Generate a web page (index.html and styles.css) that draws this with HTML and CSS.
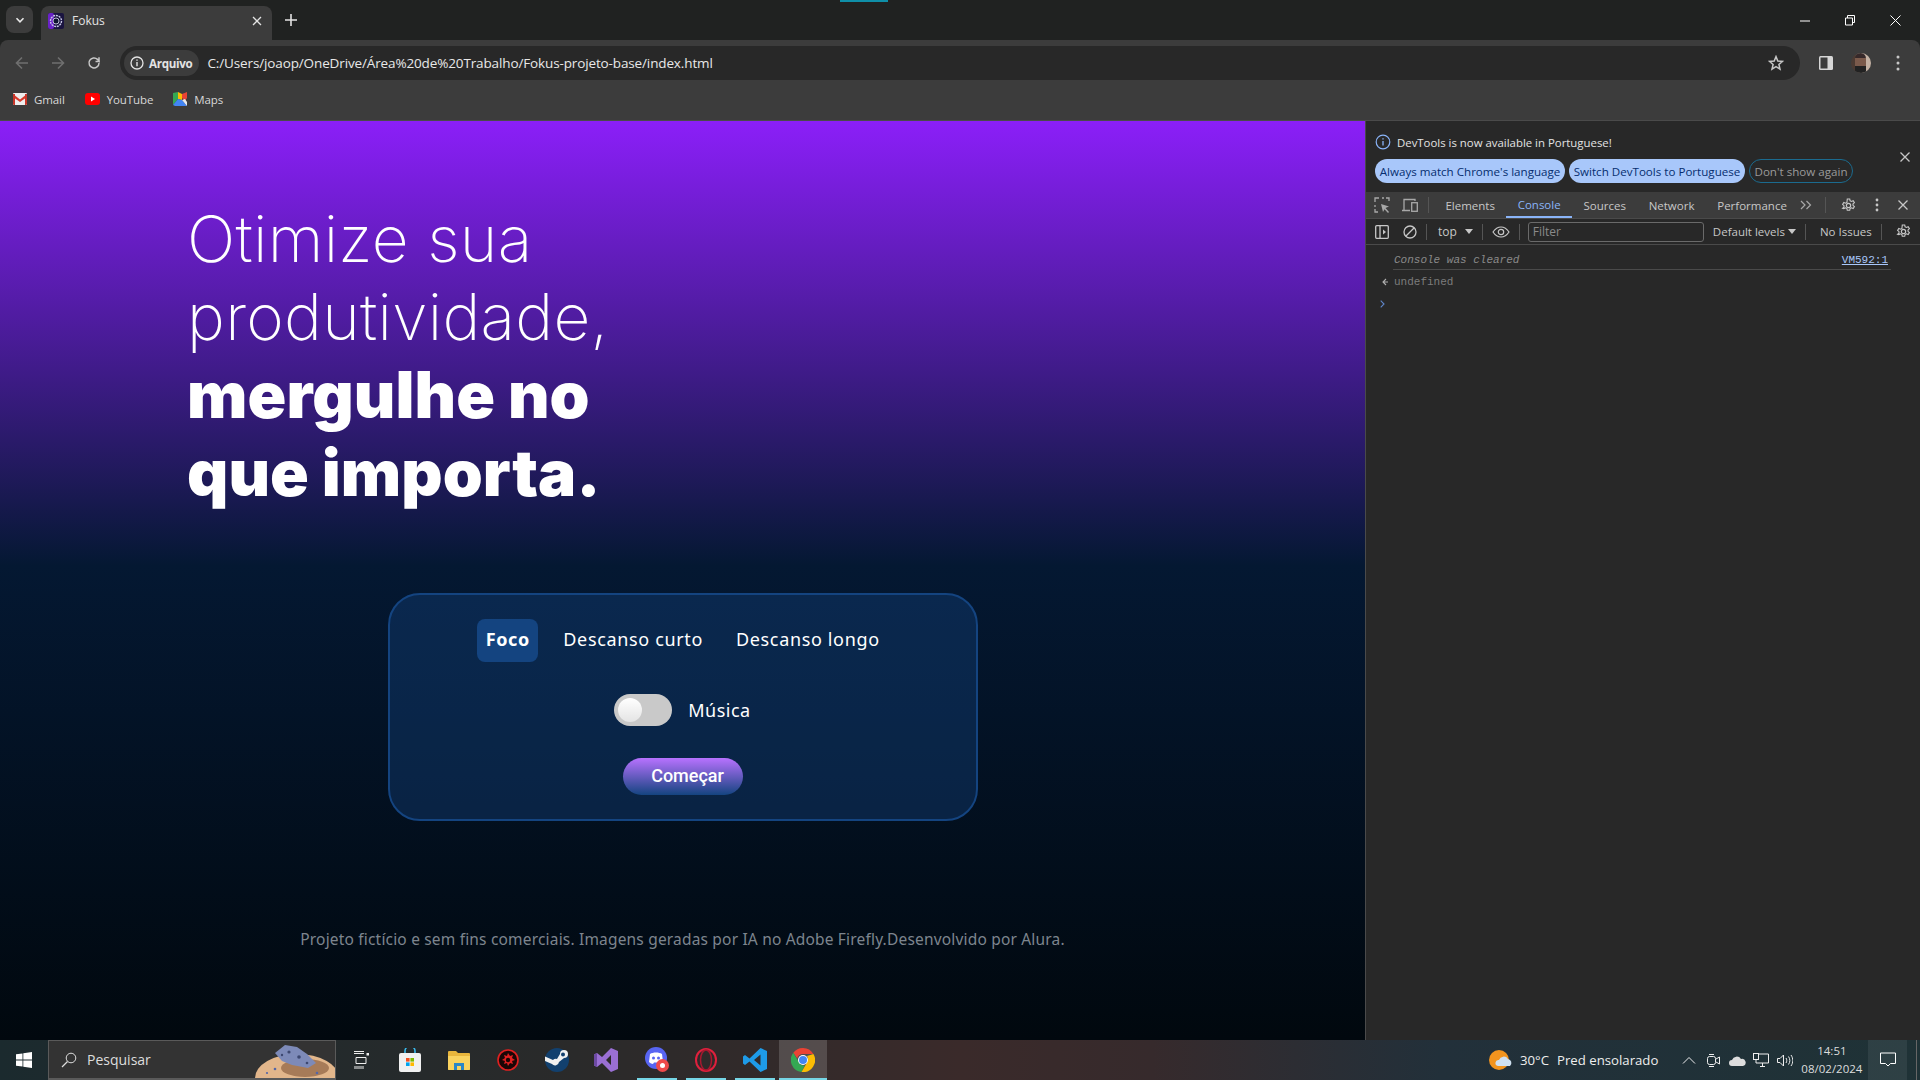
FILE: index.html
```html
<!DOCTYPE html>
<html lang="pt-BR">
<head>
<meta charset="utf-8">
<title>Fokus</title>
<link rel="stylesheet" href="styles.css">
</head>
<body>
<div class="window">
  <div class="top-strip"></div>
  <header class="tabstrip">
    <div class="tab-search"><svg width="10" height="10" viewBox="0 0 10 10"><path d="M1.5 3.2 5 6.8l3.5-3.6" fill="none" stroke="#e8e8e8" stroke-width="1.6"/></svg></div>
    <div class="tab">
      <svg class="favicon" width="16" height="16" viewBox="0 0 16 16"><rect width="16" height="16" rx="2" fill="#1a1440"/><rect width="6" height="16" rx="2" fill="#6a22c8"/><circle cx="8" cy="8" r="5.5" fill="none" stroke="#c9c9e8" stroke-width="1.4" stroke-dasharray="2 .8"/><circle cx="8" cy="8" r="3" fill="#0d1330" stroke="#e6e6f5" stroke-width=".8"/></svg>
      <span class="tab-title">Fokus</span>
      <svg width="10" height="10" viewBox="0 0 10 10"><path d="M1 1l8 8M9 1 1 9" stroke="#e3e3e3" stroke-width="1.3"/></svg>
    </div>
    <svg class="new-tab" width="12" height="12" viewBox="0 0 12 12"><path d="M6 0v12M0 6h12" stroke="#e3e3e3" stroke-width="1.6"/></svg>
    <div class="win-controls">
      <svg width="10" height="10" viewBox="0 0 10 10"><path d="M0 5h10" stroke="#fff"/></svg>
      <svg width="10" height="11" viewBox="0 0 10 11"><path d="M.5 3h7v7h-7zM2.5 3V.5h7v7H7.5" fill="none" stroke="#fff"/></svg>
      <svg width="11" height="11" viewBox="0 0 11 11"><path d="M.5.5l10 10M10.500.5l-10 10" stroke="#fff"/></svg>
    </div>
  </header>
  <div class="toolbar">
    <div class="nav-row">
      <svg class="nav-icon" width="14" height="14" viewBox="0 0 14 14"><path d="M13 7H2M7 1.500 1.500 7 7 12.500" fill="none" stroke="#6f6f6f" stroke-width="1.600"/></svg>
      <svg class="nav-icon" width="14" height="14" viewBox="0 0 14 14"><path d="M1 7h11M7 1.500 12.500 7 7 12.500" fill="none" stroke="#6f6f6f" stroke-width="1.600"/></svg>
      <svg class="nav-icon" width="14" height="14" viewBox="0 0 14 14"><path d="M12 7a5 5 0 1 1-1.500-3.600L12 5V1.200" fill="none" stroke="#c7c7c7" stroke-width="1.500"/><path d="M12.500 5.500H8.500" stroke="#c7c7c7" stroke-width="1.500"/></svg>
      <div class="omnibox">
        <div class="chip">
          <svg width="14" height="14" viewBox="0 0 14 14"><circle cx="7" cy="7" r="6" fill="none" stroke="#e3e3e3" stroke-width="1.300"/><path d="M7 6v4.200M7 3.600v1.200" stroke="#e3e3e3" stroke-width="1.400"/></svg>
          <span>Arquivo</span>
        </div>
        <span class="url">C:/Users/joaop/OneDrive/Área%20de%20Trabalho/Fokus-projeto-base/index.html</span>
        <svg class="star" width="16" height="16" viewBox="0 0 16 16"><path d="M8 1.600 9.800 6l4.700.4-3.600 3.100 1.100 4.600L8 11.700l-4 2.400 1.100-4.600L1.500 6.400 6.200 6z" fill="none" stroke="#c7c7c7" stroke-width="1.500"/></svg>
      </div>
      <svg class="panel-icon" width="14" height="14" viewBox="0 0 14 14"><rect width="14" height="14" rx="1.500" fill="#d6d6d6"/><rect x="1.500" y="1.500" width="7" height="11" fill="#3c3c3c"/></svg>
      <div class="avatar"><div class="avatar-face"></div></div>
      <svg class="menu-icon" width="4" height="16" viewBox="0 0 4 16"><circle cx="2" cy="2" r="1.500" fill="#c7c7c7"/><circle cx="2" cy="8" r="1.500" fill="#c7c7c7"/><circle cx="2" cy="14" r="1.500" fill="#c7c7c7"/></svg>
    </div>
    <div class="bookmarks">
      <div class="bookmark">
        <svg width="14" height="12" viewBox="0 0 14 12"><rect width="14" height="12" rx="1" fill="#eee"/><path d="M0 1l7 5.500L14 1v3L7 9 0 4z" fill="#d8392b"/><path d="M0 1h2v11H1a1 1 0 0 1-1-1zM14 1h-2v11h1a1 1 0 0 0 1-1z" fill="#c8362a"/></svg>
        <span>Gmail</span>
      </div>
      <div class="bookmark">
        <svg width="15" height="12" viewBox="0 0 15 12"><rect width="15" height="12" rx="3" fill="#f00"/><path d="M6 3.500v5L10 6z" fill="#fff"/></svg>
        <span>YouTube</span>
      </div>
      <div class="bookmark">
        <svg width="14" height="14" viewBox="0 0 14 14"><path d="M0 1 5 0v7L0 13z" fill="#34a853"/><path d="M5 0l4 2v6L5 7z" fill="#fbbc04"/><path d="M0 13l5-6 4 1 5 6H2z" fill="#4285f4"/><path d="M9 2l5-2v6l-2 3-3-3z" fill="#ea4335"/><path d="M9 8l3-1 2 3v4z" fill="#e8eaed"/></svg>
        <span>Maps</span>
      </div>
    </div>
  </div>
  <div class="content">
    <main class="page">
      <h1 class="headline">
        <span class="line-light">Otimize sua</span>
        <span class="line-light">produtividade,</span>
        <strong class="line-bold">mergulhe no</strong>
        <strong class="line-bold">que importa.</strong>
      </h1>
      <section class="card">
        <div class="modes">
          <button class="mode mode-active">Foco</button>
          <button class="mode">Descanso curto</button>
          <button class="mode">Descanso longo</button>
        </div>
        <div class="music">
          <div class="switch"><div class="knob"></div></div>
          <span>Música</span>
        </div>
        <button class="start">Começar</button>
      </section>
      <footer class="credits">Projeto fictício e sem fins comerciais. Imagens geradas por IA no Adobe Firefly.Desenvolvido por Alura.</footer>
    </main>
    <aside class="devtools">
      <div class="infobar">
        <div class="info-line">
          <svg width="16" height="16" viewBox="0 0 16 16"><circle cx="8" cy="8" r="6.800" fill="none" stroke="#8ab4f8" stroke-width="1.200"/><path d="M8 7v4.500M8 4.200v1.300" stroke="#8ab4f8" stroke-width="1.300"/></svg>
          <span>DevTools is now available in Portuguese!</span>
        </div>
        <div class="info-buttons">
          <span class="pill pill-a">Always match Chrome's language</span>
          <span class="pill pill-b">Switch DevTools to Portuguese</span>
          <span class="pill pill-c">Don't show again</span>
        </div>
        <svg class="info-close" width="10" height="10" viewBox="0 0 10 10"><path d="M.5.5l9 9M9.500.5l-9 9" stroke="#c7c7c7" stroke-width="1.300"/></svg>
      </div>
      <div class="dt-tabs">
        <svg class="dt-i1" width="16" height="16" viewBox="0 0 16 16"><path d="M5 1H1v4M1 8v2M1 12v3h3M8 1h2M12 1h3v3" fill="none" stroke="#a8a8a8" stroke-width="1.300"/><path d="M7 7l8 2.500-3.500 1.500L15 15l-1 1-3.500-3.800L9 15z" fill="#a8a8a8"/></svg>
        <svg class="dt-i2" width="16" height="14" viewBox="0 0 16 14"><path d="M0 12.500h8M2 12V1.500h11V3" fill="none" stroke="#a8a8a8" stroke-width="1.300"/><rect x="9.700" y="4.700" width="5.600" height="8.600" fill="none" stroke="#a8a8a8" stroke-width="1.300"/></svg>
        <i class="sep sep-tabs"></i>
        <span class="dt-tab">Elements</span>
        <span class="dt-tab dt-tab-on">Console</span>
        <span class="dt-tab">Sources</span>
        <span class="dt-tab">Network</span>
        <span class="dt-tab">Performance</span>
        <svg class="more" width="12" height="10" viewBox="0 0 12 10"><path d="M1 1l4 4-4 4M6.500 1l4 4-4 4" fill="none" stroke="#a8a8a8" stroke-width="1.200"/></svg>
        <i class="sep sep-more"></i>
        <svg class="gear" width="15" height="15" viewBox="0 0 16 16"><circle cx="8" cy="8" r="2.300" fill="none" stroke="#c7c7c7" stroke-width="1.300"/><path d="M6.700 1h2.600l.4 2 1.500.7 1.800-.9 1.300 2.200-1.500 1.300v1.500l1.500 1.300-1.300 2.200-1.800-.9-1.500.7-.4 2H6.700l-.4-2-1.500-.7-1.800.9L1.700 11l1.500-1.300V8.200L1.700 6.900 3 4.700l1.800.9 1.500-.7z" fill="none" stroke="#c7c7c7" stroke-width="1.200"/></svg>
        <svg class="dots" width="4" height="14" viewBox="0 0 4 14"><circle cx="2" cy="2" r="1.400" fill="#c7c7c7"/><circle cx="2" cy="7" r="1.400" fill="#c7c7c7"/><circle cx="2" cy="12" r="1.400" fill="#c7c7c7"/></svg>
        <svg class="dt-close" width="10" height="10" viewBox="0 0 10 10"><path d="M.5.500l9 9M9.500.500l-9 9" stroke="#c7c7c7" stroke-width="1.300"/></svg>
      </div>
      <div class="dt-bar">
        <svg class="bar-i1" width="14" height="14" viewBox="0 0 14 14"><rect x=".7" y=".7" width="12.600" height="12.600" rx="1" fill="none" stroke="#c7c7c7" stroke-width="1.300"/><path d="M5 1v12" stroke="#c7c7c7" stroke-width="1.300"/><path d="M8 4.500 11 7 8 9.500z" fill="#c7c7c7"/></svg>
        <svg class="bar-i2" width="14" height="14" viewBox="0 0 14 14"><circle cx="7" cy="7" r="6" fill="none" stroke="#c7c7c7" stroke-width="1.300"/><path d="M3 11l8-8" stroke="#c7c7c7" stroke-width="1.300"/></svg>
        <i class="sep"></i>
        <span class="bar-top">top</span>
        <svg class="caret" width="8" height="5" viewBox="0 0 8 5"><path d="M0 0h8L4 5z" fill="#c7c7c7"/></svg>
        <i class="sep"></i>
        <svg class="eye" width="18" height="12" viewBox="0 0 18 12"><path d="M1 6c2-3 5-5 8-5s6 2 8 5c-2 3-5 5-8 5S3 9 1 6z" fill="none" stroke="#c7c7c7" stroke-width="1.200"/><circle cx="9" cy="6" r="2.700" fill="none" stroke="#c7c7c7" stroke-width="1.200"/></svg>
        <i class="sep sep-eye"></i>
        <span class="filter">Filter</span>
        <span class="levels">Default levels</span>
        <svg class="caret" width="8" height="5" viewBox="0 0 8 5"><path d="M0 0h8L4 5z" fill="#c7c7c7"/></svg>
        <i class="sep sep-levels"></i>
        <span class="issues">No Issues</span>
        <i class="sep"></i>
        <svg class="bar-gear" width="15" height="15" viewBox="0 0 16 16"><circle cx="8" cy="8" r="2.300" fill="none" stroke="#c7c7c7" stroke-width="1.300"/><path d="M6.700 1h2.600l.4 2 1.500.7 1.800-.9 1.300 2.200-1.500 1.300v1.500l1.500 1.300-1.300 2.200-1.800-.9-1.500.7-.4 2H6.700l-.4-2-1.500-.7-1.800.9L1.700 11l1.500-1.300V8.200L1.700 6.900 3 4.700l1.800.9 1.500-.7z" fill="none" stroke="#c7c7c7" stroke-width="1.200"/></svg>
      </div>
      <div class="console">
        <div class="row-cleared">
          <span class="cleared">Console was cleared</span>
          <a class="vm">VM592:1</a>
        </div>
        <div class="row-undef">
          <svg width="7" height="8" viewBox="0 0 7 8"><path d="M6 4H1.500M4 1 1 4l3 3" fill="none" stroke="#b0b0b0" stroke-width="1.100"/></svg>
          <span>undefined</span>
        </div>
        <div class="row-prompt"><svg width="5" height="8" viewBox="0 0 5 8"><path d="M.7.700 4 4 .7 7.300" fill="none" stroke="#5f86c9" stroke-width="1.100"/></svg></div>
      </div>
    </aside>
  </div>
  <nav class="taskbar">
    <div class="start-btn"><svg width="16" height="16" viewBox="0 0 16 16"><path d="M0 2.300 6.500 1.400v6.200H0zM7.300 1.300 16 0v7.600H7.300zM0 8.400h6.500v6.200L0 13.700zM7.300 8.400H16V16l-8.700-1.300z" fill="#fff"/></svg></div>
    <div class="search">
      <svg width="16" height="16" viewBox="0 0 16 16"><circle cx="10" cy="6" r="4.800" fill="none" stroke="#ddd" stroke-width="1"/><path d="M6.500 9.500 1 15" stroke="#ddd" stroke-width="1.200"/></svg>
      <span>Pesquisar</span>
      <svg class="donut" width="80" height="34" viewBox="0 0 80 34"><ellipse cx="42" cy="34" rx="42" ry="24" fill="#e2b68b"/><ellipse cx="50" cy="24" rx="24" ry="9" fill="#a77b58"/><path d="M20 9l10-8 12 2 10 7 9 9-8 5-16-3-10-4z" fill="#7d8ab8"/><circle cx="34" cy="8" r="1.600" fill="#3d4870"/><circle cx="44" cy="13" r="1.800" fill="#3d4870"/><circle cx="27" cy="11" r="1.200" fill="#3d4870"/><circle cx="52" cy="19" r="1.300" fill="#3d4870"/><circle cx="20" cy="25" r="1.300" fill="#5466a8"/><circle cx="12" cy="29" r="1.100" fill="#5466a8"/><circle cx="62" cy="29" r="1.300" fill="#5466a8"/></svg>
    </div>
    <div class="task-item"><svg width="16" height="18" viewBox="0 0 16 18"><path d="M1 .5h10M1 2.500h10M3 6.500h10v6H3zM1 16h10M1 18h10" fill="none" stroke="#eee" stroke-width="1"/><rect x="13.500" y="2" width="2.500" height="2.500" fill="#eee"/></svg></div>
    <div class="task-item"><svg width="22" height="24" viewBox="0 0 22 24"><path d="M6 6V3a5 5 0 0 1 10 0v3" fill="none" stroke="#38b6e8" stroke-width="1.600"/><rect x="0" y="5" width="22" height="19" rx="2" fill="#f1f1f1"/><rect x="7" y="10" width="3.600" height="3.600" fill="#f25022"/><rect x="11.400" y="10" width="3.600" height="3.600" fill="#7fba00"/><rect x="7" y="14.400" width="3.600" height="3.600" fill="#00a4ef"/><rect x="11.400" y="14.400" width="3.600" height="3.600" fill="#ffb900"/></svg></div>
    <div class="task-item"><svg width="22" height="20" viewBox="0 0 22 20"><path d="M0 2a1 1 0 0 1 1-1h7l2 2h11a1 1 0 0 1 1 1v15a1 1 0 0 1-1 1H1a1 1 0 0 1-1-1z" fill="#e9b63c"/><path d="M0 6h22v13a1 1 0 0 1-1 1H1a1 1 0 0 1-1-1z" fill="#fad35f"/><path d="M6 20v-7h10v7h-3v-4H9v4z" fill="#2b87c8"/></svg></div>
    <div class="task-item"><svg width="22" height="22" viewBox="0 0 22 22"><circle cx="11" cy="11" r="10" fill="#1b0606" stroke="#e02020" stroke-width="1.600"/><path d="M11 4l2 3 3-1-1 3 3 2-3 1 1 3-3-1-2 3-1-3-3 1 1-3-3-1 3-2-1-3 3 1z" fill="#e02020"/><circle cx="11" cy="11" r="2.200" fill="#1b0606"/></svg></div>
    <div class="task-item"><svg width="24" height="24" viewBox="0 0 24 24"><circle cx="12" cy="12" r="12" fill="#12406e"/><path d="M0 13l7 3a4 4 0 0 0 7-2l5-4a4 4 0 1 0-4-4l-3 5a4 4 0 0 0-4 1L0 8.500z" fill="#f1f1f1"/><circle cx="18" cy="6.500" r="2" fill="#12406e"/></svg></div>
    <div class="task-item"><svg width="24" height="24" viewBox="0 0 24 24"><path d="M17 0 24 3v18l-7 3-9-9-5 4-3-1.500V6.500L3 5l5 4zM17 7l-5 5 5 5z" fill="#9a6fd4"/><path d="M0 6.500 3 5v14l-3-1.500z" fill="#6d4aa3"/></svg></div>
    <div class="task-item task-running task-discord"><svg width="24" height="26" viewBox="0 0 24 26"><circle cx="11" cy="11" r="11" fill="#5865f2"/><path d="M5 7c3-2 9-2 12 0l1 8c-1 1-3 2-4 2l-1-1.500h-4L8 17c-1 0-3-1-4-2z" fill="#fff"/><circle cx="8.500" cy="11" r="1.500" fill="#5865f2"/><circle cx="13.500" cy="11" r="1.500" fill="#5865f2"/><circle cx="17.500" cy="18.500" r="6.500" fill="#ef4a4a"/><circle cx="17.500" cy="18.500" r="2.500" fill="#fff"/></svg></div>
    <div class="task-item task-running"><svg width="22" height="24" viewBox="0 0 22 24"><ellipse cx="11" cy="12" rx="10" ry="11" fill="none" stroke="#e0203d" stroke-width="2"/><ellipse cx="11" cy="12" rx="5.500" ry="10" fill="none" stroke="#a8182f" stroke-width="1.500"/></svg></div>
    <div class="task-item task-running"><svg width="24" height="24" viewBox="0 0 24 24"><path d="M17.500 0 24 3v18l-6.500 3-11-10.500L2 17l-2-1.500V8.500L2 7l4.500 3.500zM17.500 6.500 11 12l6.500 5.500z" fill="#1e9be8"/></svg></div>
    <div class="task-item task-chrome"><svg width="24" height="24" viewBox="0 0 24 24"><path d="M12 0a12 12 0 0 1 10.400 6H12a6 6 0 0 0-5.800 4.500L2.300 4.800A12 12 0 0 1 12 0z" fill="#ea4335"/><path d="M2.300 4.800 7.500 13.500a6 6 0 0 0 6.200 4L10.500 24A12 12 0 0 1 2.300 4.800z" fill="#34a853"/><path d="M22.400 6A12 12 0 0 1 10.500 24l5.200-9A6 6 0 0 0 16 8z" fill="#fbbc04"/><circle cx="12" cy="12" r="5" fill="#fff"/><circle cx="12" cy="12" r="4" fill="#4285f4"/></svg></div>
    <div class="tray">
      <div class="weather">
        <svg width="24" height="22" viewBox="0 0 24 22"><circle cx="10" cy="11" r="10" fill="#f2941e"/><path d="M9 17a3 3 0 0 1 1-6 5 5 0 0 1 9-1 4 4 0 0 1 2 7z" fill="#cfe0f0"/></svg>
        <span class="temp">30°C</span>
        <span>Pred ensolarado</span>
      </div>
      <div class="tray-icons">
        <svg width="14" height="8" viewBox="0 0 14 8"><path d="M1 7.500 7 1.500l6 6" fill="none" stroke="#eee" stroke-width="1"/></svg>
        <svg width="13" height="15" viewBox="0 0 13 15"><rect x=".5" y="3.500" width="8" height="8" rx="2" fill="none" stroke="#eee"/><path d="M9 6l3.500-2v7L9 9M2 1.500h5M2 13.500h5" fill="none" stroke="#eee"/></svg>
        <svg width="17" height="11" viewBox="0 0 17 11"><path d="M3 11a3 3 0 0 1 0-6 5 5 0 0 1 9-1 3.500 3.500 0 0 1 2 7z" fill="#ddd"/></svg>
        <svg width="16" height="14" viewBox="0 0 16 14"><path d="M5.500 1H15.500V10H3V7M7 13.500h5M9.500 10v3.500" fill="none" stroke="#eee"/><rect x=".5" y=".5" width="5" height="6" fill="none" stroke="#eee"/></svg>
        <svg width="16" height="13" viewBox="0 0 16 13"><path d="M.5 4.500h2.500L6.500 1v11L3 8.500H.5zM9 4c1 1.500 1 3.500 0 5M11.500 2.500c1.800 2.500 1.800 5.500 0 8M14 1c2.400 3.500 2.400 7.500 0 11" fill="none" stroke="#eee"/></svg>
      </div>
      <div class="clock"><span>14:51</span><span>08/02/2024</span></div>
      <div class="notify"><svg width="16" height="16" viewBox="0 0 16 16"><path d="M.5 1h15v10.500h-5L8 14l-2.500-2.500h-5z" fill="none" stroke="#fff"/></svg></div>
      <i class="show-desktop"></i>
    </div>
  </nav>
</div>
</body>
</html>
```
FILE: styles.css
```css
* { box-sizing: border-box; }
html, body { margin: 0; height: 100%; overflow: hidden; }
body { font-family: "Open Sans", "Noto Sans", sans-serif; color: #e3e3e3; }
svg { display: block; flex: none; }
.window { position: relative; display: flex; flex-direction: column; width: 1920px; height: 1080px; background: #202221; }
.top-strip { position: absolute; left: 840px; top: 0; width: 48px; height: 2px; background: #0f8fa8; }

.tabstrip { display: flex; align-items: flex-end; height: 40px; flex: none; padding-left: 6px; background: #202221; }
.tab-search { display: flex; align-items: center; justify-content: center; width: 27px; height: 27px; margin-bottom: 7px; border-radius: 8px; background: #3c3c3c; }
.tab { display: flex; align-items: center; width: 231px; height: 34px; margin-left: 8px; padding: 0 10px 5px 7px; border-radius: 8px 8px 0 0; background: #3c3c3c; }
.favicon { margin-right: 8px; }
.tab-title { flex: 1; font-size: 12px; color: #e3e3e3; }
.new-tab { margin: 0 0 14px 13px; }
.win-controls { display: flex; align-items: center; gap: 35px; margin: 0 19px 14px auto; }

.toolbar { flex: none; height: 81px; background: #3c3c3c; border-bottom: 1px solid #4a4a4a; border-radius: 8px 8px 0 0; }
.nav-row { display: flex; align-items: center; height: 40px; padding: 6px 0 0 15px; }
.nav-icon { margin-right: 22px; }
.omnibox { display: flex; align-items: center; width: 1680px; height: 34px; margin-left: -3px; padding: 0 16px 0 4px; border-radius: 17px; background: #282828; }
.chip { display: flex; align-items: center; gap: 5px; height: 26px; padding: 0 7px 0 6px; border-radius: 13px; background: #3c3c3c; font-size: 11.6px; font-weight: 700; color: #e3e3e3; letter-spacing: -.3px; }
.url { margin-left: 8px; font-size: 13.5px; color: #e8e8e8; letter-spacing: -.13px; }
.star { margin-left: auto; }
.panel-icon { margin-left: 19px; }
.avatar { width: 20px; height: 20px; margin-left: 18px; border-radius: 50%; background: linear-gradient(90deg, #4c3b33 0 20%, #c4b2a4 70%); overflow: hidden; }
.avatar-face { width: 11px; height: 20px; margin-left: 4px; border-radius: 6px 6px 2px 2px; background: linear-gradient(#36292a 0 25%, #7b5a4b 25% 65%, #222 65%); }
.menu-icon { margin-left: 25px; }
.bookmarks { display: flex; align-items: center; gap: 20px; height: 38px; padding-left: 13px; }
.bookmark { display: flex; align-items: center; gap: 7px; font-size: 11.5px; color: #d8d8d8; letter-spacing: -.1px; }

.content { display: flex; flex: 1; min-height: 0; }
.page { display: flex; flex-direction: column; align-items: center; width: 1365px; flex: none; background: linear-gradient(180deg, #8B1FF8 0%, #041832 48.44%, #01080E 100%); }
.headline { align-self: flex-start; margin: 79px 0 0 187px; font-size: 64px; line-height: 78px; font-family: "Inter", sans-serif; color: #fff; font-weight: 400; }
.line-light, .line-bold { display: block; white-space: nowrap; }
.line-light { font-weight: 200; letter-spacing: .3px; }
.line-bold { font-weight: 900; letter-spacing: .1px; }

.card { display: flex; flex-direction: column; align-items: center; width: 590px; height: 228px; margin-top: 81px; border: 2px solid #144480; border-radius: 32px; background: rgba(20, 68, 128, .38); }
.modes { display: flex; align-items: center; margin-top: 24px; }
.mode { height: 43px; padding: 0 8px 3px; border: 0; border-radius: 8px; background: none; color: #fff; font: 400 18px "Noto Sans", sans-serif; letter-spacing: .65px; }
.mode + .mode { margin-left: 17px; }
.mode-active { width: 61px; background: #144480; font-weight: 700; }
.music { display: flex; align-items: center; gap: 16px; margin-top: 32px; font: 400 18px "Noto Sans", sans-serif; color: #fff; letter-spacing: .5px; }
.switch { display: flex; align-items: center; width: 58px; height: 32px; padding-left: 4px; border-radius: 16px; background: #c9c9c9; }
.knob { width: 24px; height: 24px; border-radius: 50%; background: linear-gradient(#fff, #e4e4e4); }
.start { width: 120px; height: 37px; margin-top: 32px; padding: 0 0 3px 10px; border: 0; border-radius: 18.5px; background: linear-gradient(#B872FF, #144480); color: #fff; font: 500 18px "Roboto", sans-serif; }
.credits { margin-top: 107px; font: 400 15.5px "Noto Sans", sans-serif; color: #7d858e; white-space: nowrap; letter-spacing: .18px; }

.devtools { flex: 1; min-width: 0; border-left: 1px solid #4a4a4a; background: #282828; font-size: 12px; }
.infobar { position: relative; height: 71px; padding: 13px 0 0 9px; }
.info-line { display: flex; align-items: center; gap: 6px; font-size: 11.4px; color: #e3e3e3; }
.info-buttons { display: flex; gap: 4px; margin-top: 9px; }
.pill { display: flex; align-items: center; justify-content: center; height: 24px; border-radius: 12px; font-size: 11.6px; white-space: nowrap; }
.pill-a { width: 190px; }
.pill-b { width: 176px; }
.pill-a, .pill-b { background: #a8c7fa; color: #062e6f; }
.pill-c { width: 104px; border: 1px solid #1b6b8f; color: #9a9a9a; }
.info-close { position: absolute; right: 10px; top: 31px; }
.dt-tabs, .dt-bar { display: flex; align-items: center; border-bottom: 1px solid #4a4a4a; }
.dt-tabs { height: 27px; background: #3c3c3c; color: #c7c7c7; }
.dt-i1 { margin-left: 8px; }
.dt-i2 { margin-left: 12px; }
.sep { display: block; flex: none; width: 1px; height: 16px; margin: 0 9px; background: #555; }
.sep-tabs { margin: 0 5px 0 10px; }
.dt-tab { display: flex; align-items: center; height: 26px; padding: 0 11.4px; font-size: 11.5px; }
.dt-tab-on { color: #8ab4f8; border-bottom: 2px solid #8ab4f8; }
.more { margin-left: 2px; }
.sep-more { margin: 0 15px 0 13px; }
.gear { margin-right: 19px; }
.dots { margin-right: 19px; }
.dt-bar { height: 26px; color: #c7c7c7; }
.bar-i1 { margin-left: 9px; }
.bar-i2 { margin-left: 14px; }
.bar-top { margin: 0 8px 0 2px; font-size: 12px; }
.eye { margin-left: 0; }
.sep-eye { margin-right: 8px; }
.filter { display: flex; align-items: center; width: 176px; height: 20px; padding-left: 4px; border: 1px solid #6a6a6a; border-radius: 3px; color: #8a8a8a; font-size: 12px; }
.levels { margin: 0 3px 0 9px; font-size: 11.5px; white-space: nowrap; }
.sep-levels { margin-left: 9px; }
.issues { white-space: nowrap; font-size: 11.5px; margin-left: 5px; }
.bar-gear { margin-left: 5px; }
.console { font: 11px "Liberation Mono", monospace; }
.row-cleared { display: flex; justify-content: space-between; height: 25px; margin: 0 29px 0 27px; padding: 9px 0 0 1px; border-bottom: 1px solid #4a4a4a; }
.cleared { font-style: italic; color: #8a8a8a; }
.vm { padding-right: 3px; color: #a8c7fa; text-decoration: underline; }
.row-undef { display: flex; align-items: center; height: 22px; margin-top: 1px; padding-left: 16px; color: #7c7c7c; }
.row-undef span { margin-left: 5px; }
.row-prompt { padding: 7px 0 0 14px; }

.taskbar { display: flex; align-items: center; flex: none; height: 40px; background: linear-gradient(90deg, #1b2a2e 0%, #2a2a2a 30%, #3a2a2a 50%, #362a2c 60%, #22303a 75%, #1f3236 100%); font-size: 13px; color: #eee; }
.start-btn { display: flex; align-items: center; justify-content: center; width: 48px; height: 40px; }
.search { position: relative; display: flex; align-items: center; width: 288px; height: 40px; padding-left: 12px; border: 1px solid #5a5a5a; border-bottom-width: 2px; background: #333; font-size: 14px; color: #ddd; overflow: hidden; }
.search span { margin-left: 10px; }
.donut { position: absolute; right: 0; bottom: 0; }
.task-item { display: flex; align-items: center; justify-content: center; width: 49px; height: 40px; }
.task-discord { margin-left: 2px; }
.task-running { background: linear-gradient(#76d6e6, #76d6e6) center bottom / 40px 2px no-repeat; }
.task-chrome { width: 48px; background: rgba(255, 255, 255, .16); box-shadow: inset 0 -2px 0 #76d6e6; }
.tray { display: flex; align-items: center; flex: 1; min-width: 0; height: 40px; padding-left: 662px; }
.weather { display: flex; align-items: center; gap: 8px; white-space: nowrap; font-size: 13.2px; }
.temp { margin-left: -1px; }
.tray-icons { display: grid; grid-template-columns: repeat(5, 24px); justify-items: center; align-items: center; margin-left: 19px; }
.clock { display: flex; flex-direction: column; align-items: center; margin-left: 4px; font-size: 11.5px; line-height: 18px; white-space: nowrap; color: #ddd; }
.notify { display: flex; align-items: center; justify-content: center; width: 39px; height: 40px; margin-left: 6px; background: rgba(255, 255, 255, .07); }
.show-desktop { display: block; width: 1px; height: 40px; margin-left: 9px; background: #666; }
```
